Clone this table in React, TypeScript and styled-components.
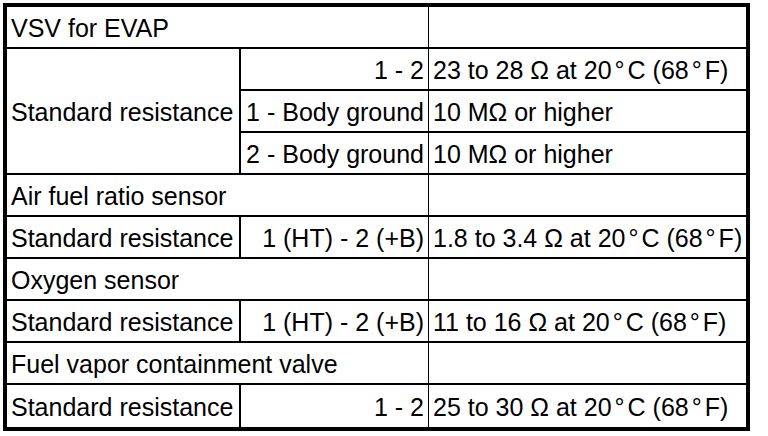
import React from "react";
import styled, { createGlobalStyle } from "styled-components";

const Global = createGlobalStyle`
  html, body { margin: 0; padding: 0; background: #fff; }
  body { font-family: "Liberation Sans", Arial, sans-serif; }
`;

const Page = styled.div`
  padding: 3px;
`;

const Table = styled.table`
  border: 4px solid #000;
  border-spacing: 0;
  table-layout: fixed;
  width: 747px;
  font-family: "Liberation Sans", Arial, sans-serif;
  font-size: 25px;
  color: #000;
`;

const Row = styled.tr<{ $last?: boolean }>`
  height: 42px;
  & > td {
    border-bottom: ${(p) => (p.$last ? "0" : "2px solid #000")};
  }
`;

const Cell = styled.td<{ $align?: "left" | "right"; $rule?: 0 | 1 | 2 }>`
  box-sizing: border-box;
  padding: 2px 4px 0;
  vertical-align: middle;
  white-space: nowrap;
  text-align: ${(p) => p.$align ?? "left"};
  border-right: ${(p) => (p.$rule ? `${p.$rule}px solid #000` : "0")};
  line-height: 28px;
`;

const Deg = styled.span`
  margin: 0 3px;
`;

const Temp = ({ lo, hi }: { lo: string; hi: string }) => (
  <>
    {lo} to {hi} Ω at 20<Deg>°</Deg>C (68<Deg>°</Deg>F)
  </>
);

type Section = {
  title: string;
  items: { term: string; value: React.ReactNode }[];
};

const sections: Section[] = [
  {
    title: "VSV for EVAP",
    items: [
      { term: "1 - 2", value: <Temp lo="23" hi="28" /> },
      { term: "1 - Body ground", value: "10 MΩ or higher" },
      { term: "2 - Body ground", value: "10 MΩ or higher" },
    ],
  },
  {
    title: "Air fuel ratio sensor",
    items: [{ term: "1 (HT) - 2 (+B)", value: <Temp lo="1.8" hi="3.4" /> }],
  },
  {
    title: "Oxygen sensor",
    items: [{ term: "1 (HT) - 2 (+B)", value: <Temp lo="11" hi="16" /> }],
  },
  {
    title: "Fuel vapor containment valve",
    items: [{ term: "1 - 2", value: <Temp lo="25" hi="30" /> }],
  },
];

export default function App() {
  return (
    <>
      <Global />
      <Page>
        <Table>
          <colgroup>
            <col style={{ width: 234 }} />
            <col style={{ width: 188 }} />
            <col />
          </colgroup>
          <tbody>
            {sections.map((s, si) => (
              <React.Fragment key={s.title}>
                <Row>
                  <Cell colSpan={2} $rule={1}>
                    {s.title}
                  </Cell>
                  <Cell />
                </Row>
                {s.items.map((it, i) => (
                  <Row
                    key={i}
                    $last={si === sections.length - 1 && i === s.items.length - 1}
                  >
                    {i === 0 && (
                      <Cell rowSpan={s.items.length} $rule={2}>
                        Standard resistance
                      </Cell>
                    )}
                    <Cell $align="right" $rule={1}>
                      {it.term}
                    </Cell>
                    <Cell>{it.value}</Cell>
                  </Row>
                ))}
              </React.Fragment>
            ))}
          </tbody>
        </Table>
      </Page>
    </>
  );
}
